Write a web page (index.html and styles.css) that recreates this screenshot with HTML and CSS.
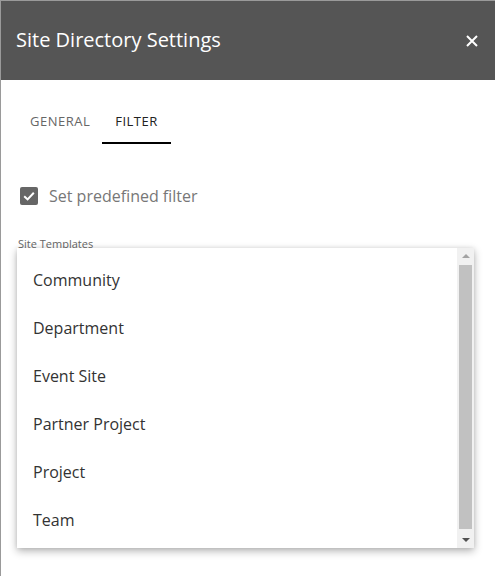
FILE: index.html
```html
<!DOCTYPE html>
<html>
<head>
<meta charset="utf-8">
<link rel="stylesheet" href="styles.css">
</head>
<body>
<div class="dialog">
  <header class="header">
    <h1 class="title">Site Directory Settings</h1>
    <button class="close" aria-label="Close">
      <svg width="12" height="12" viewBox="0 0 12 12"><path d="M1 1L11 11M11 1L1 11" stroke="#fff" stroke-width="2" fill="none"/></svg>
    </button>
  </header>
  <div class="body">
    <nav class="tabs">
      <span class="tab">General</span>
      <span class="tab active">Filter</span>
    </nav>
    <label class="check">
      <span class="box"><svg width="18" height="18" viewBox="0 0 18 18"><path d="M4.2 9.2L7.6 12.4L13.8 5.8" stroke="#fff" stroke-width="2" fill="none"/></svg></span>
      <span class="check-label">Set predefined filter</span>
    </label>
    <div class="field">
      <div class="field-label">Site Templates</div>
      <div class="menu">
        <ul class="options">
          <li>Community</li>
          <li>Department</li>
          <li>Event Site</li>
          <li>Partner Project</li>
          <li>Project</li>
          <li>Team</li>
        </ul>
        <div class="scrollbar">
          <div class="arrow up"></div>
          <div class="thumb"></div>
          <div class="arrow down"></div>
        </div>
      </div>
    </div>
  </div>
</div>
</body>
</html>
```
FILE: styles.css
```css
html, body {
  margin: 0;
  padding: 0;
  background: #fff;
}
body {
  font-family: "Open Sans", "Noto Sans", sans-serif;
  width: 495px;
  height: 577px;
  overflow: hidden;
}
.dialog {
  border-left: 1px solid #9a9a9a;
  border-top: 1px solid #9a9a9a;
  height: 576px;
  box-sizing: border-box;
}
.header {
  height: 79px;
  background: #555555;
  display: flex;
  align-items: center;
  justify-content: space-between;
  padding: 0 17px 0 15px;
}
.title {
  margin: 0;
  font-size: 20px;
  font-weight: 400;
  color: #fff;
  line-height: 1;
  position: relative;
  top: -1px;
}
.close {
  border: 0;
  background: none;
  padding: 0;
  width: 12px;
  height: 12px;
  display: flex;
}
.body {
  padding: 18px 0 0 16px;
}
.tabs {
  display: flex;
}
.tab {
  text-transform: uppercase;
  font-size: 13px;
  letter-spacing: 0.5px;
  color: #666;
  padding: 0 12px 0 13px;
  height: 44px;
  line-height: 46px;
  border-bottom: 2px solid transparent;
}
.tab.active {
  color: #222;
  border-bottom-color: #000;
  padding: 0 13px;
}
.check {
  display: flex;
  align-items: center;
  margin: 43px 0 0 3px;
  height: 18px;
}
.box {
  width: 18px;
  height: 18px;
  border-radius: 2px;
  background: #666;
  display: flex;
}
.check-label {
  font-size: 16px;
  color: #777;
  margin-left: 11px;
}
.field {
  position: relative;
  margin-top: 32px;
}
.field-label {
  font-size: 11px;
  color: #666;
  line-height: 14px;
  margin-left: 1px;
}
.menu {
  position: absolute;
  left: 0;
  top: 11px;
  width: 457px;
  height: 300px;
  background: #fff;
  display: flex;
  box-shadow: 0 3px 8px rgba(0,0,0,0.3), 0 0 4px rgba(0,0,0,0.08);
}
.options {
  list-style: none;
  margin: 0;
  padding: 8px 0 0;
  flex: 1;
  overflow: hidden;
}
.options li {
  height: 48px;
  line-height: 48px;
  font-size: 16px;
  color: #333;
  padding-left: 16px;
}
.scrollbar {
  width: 17px;
  background: #f1f1f1;
  display: flex;
  flex-direction: column;
  align-items: center;
}
.arrow {
  width: 0;
  height: 0;
  border-left: 4px solid transparent;
  border-right: 4px solid transparent;
}
.arrow.up {
  border-bottom: 4px solid #a3a3a3;
  margin: 6px 0 7px;
}
.arrow.down {
  border-top: 4px solid #505050;
  margin: 9px 0 6px;
}
.thumb {
  width: 13px;
  flex: 1;
  background: #c1c1c1;
}
```
